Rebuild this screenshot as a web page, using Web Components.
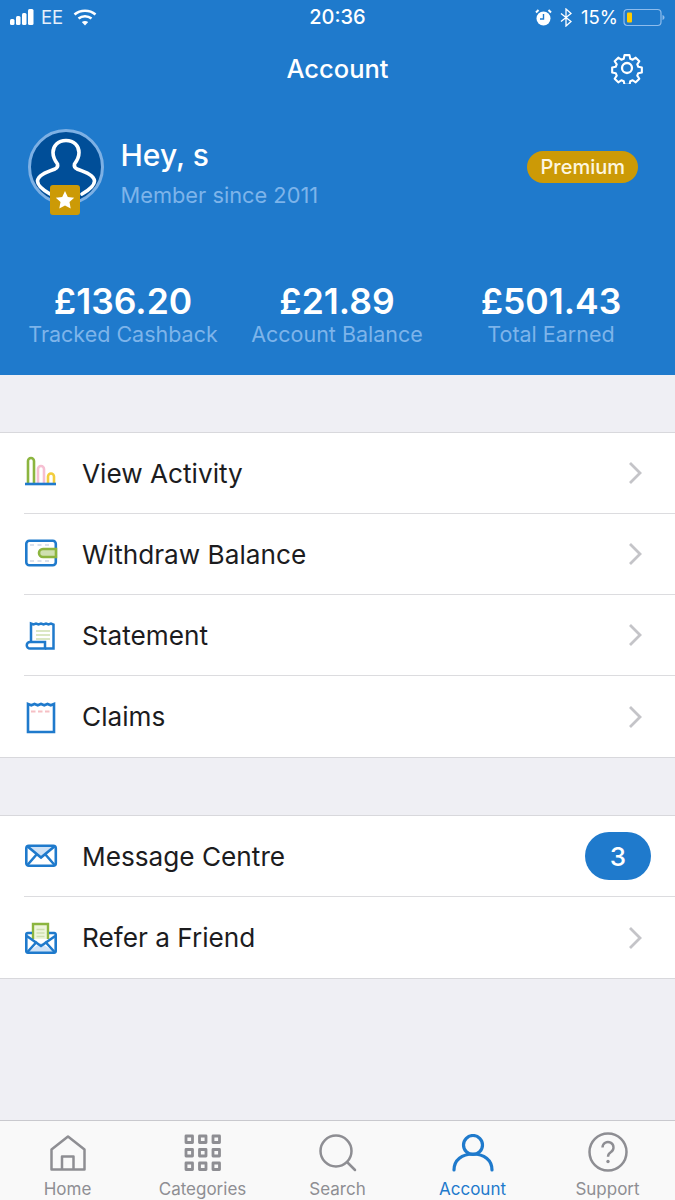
<!DOCTYPE html>
<html lang="en">
<head>
<meta charset="utf-8">
<title>Account</title>
<style>
  html, body { margin: 0; padding: 0; }
  body {
    width: 675px;
    height: 1200px;
    overflow: hidden;
    background: #efeff4;
    font-family: Inter, "Noto Sans", sans-serif;
  }
  account-screen { height: 1200px; }
</style>
</head>
<body>
<account-screen>
  <status-bar slot="top"></status-bar>
  <account-header slot="top">
    <stat-item value="£136.20" label="Tracked Cashback"></stat-item>
    <stat-item value="£21.89" label="Account Balance"></stat-item>
    <stat-item value="£501.43" label="Total Earned"></stat-item>
  </account-header>

  <menu-group>
    <menu-row label="View Activity">
      <svg slot="icon" width="34" height="34" viewBox="0 0 34 34" fill="none" stroke-width="2.600">
        <path d="M4 28V5a3 3 0 0 1 6 0V28" stroke="#8cb53f"/>
        <path d="M14 28V13a3 3 0 0 1 6 0V28" stroke="#f6bfd2"/>
        <path d="M24 28V20.500a3 3 0 0 1 6 0V28" stroke="#f2cd3c"/>
        <path d="M1 28h31" stroke="#1f7acc"/>
      </svg>
    </menu-row>
    <menu-row label="Withdraw Balance">
      <svg slot="icon" width="34" height="34" viewBox="0 0 34 34" fill="none">
        <rect x="2.300" y="3.800" width="29.500" height="24.500" rx="3" stroke="#1f7acc" stroke-width="2.600"/>
        <path d="M6 8h22M6 24h22" stroke="#cfd8e6" stroke-width="1.400" stroke-dasharray="4 3.500"/>
        <path d="M32 12H19a4 4 0 0 0 0 8H32z" fill="#cfe0b0" stroke="#8cb53f" stroke-width="2.600"/>
      </svg>
    </menu-row>
    <menu-row label="Statement">
      <svg slot="icon" width="34" height="34" viewBox="0 0 34 34" fill="none">
        <path d="M7 24V5.500l2.500 1 2.500-1 2.500 1 2.500-1 2.500 1 2.500-1 2.500 1 2.500-1 2.500 1V30.500H21" stroke="#1f7acc" stroke-width="2.500"/>
        <path d="M12 13h14M12 17h14M12 21h14" stroke="#cfe0b0" stroke-width="1.500"/>
        <path d="M6 24h15v6.500H6a3.250 3.250 0 0 1 0-6.500z" stroke="#1f7acc" stroke-width="2.500"/>
      </svg>
    </menu-row>
    <menu-row label="Claims">
      <svg slot="icon" width="34" height="34" viewBox="0 0 34 34" fill="none">
        <path d="M4 4l3.250 1.300L10.500 4l3.250 1.300L17 4l3.250 1.300L23.500 4l3.250 1.300L30 4v28H4z" stroke="#1f7acc" stroke-width="2.600"/>
        <path d="M7 11.500h20" stroke="#f6bfc4" stroke-width="1.800" stroke-dasharray="4.500 2.500"/>
      </svg>
    </menu-row>
  </menu-group>

  <menu-group>
    <menu-row label="Message Centre" badge="3">
      <svg slot="icon" width="34" height="34" viewBox="0 0 34 34" fill="none">
        <path d="M3 7l14 11.500L31 7z" fill="#cfe2f6"/>
        <rect x="2.300" y="6.800" width="29.500" height="20" rx="2.500" stroke="#1f7acc" stroke-width="2.600"/>
        <path d="M3 7l14 11.500L31 7M3 26.500l10-11.500M31 26.500L21 15" stroke="#1f7acc" stroke-width="2.600"/>
      </svg>
    </menu-row>
    <menu-row label="Refer a Friend">
      <svg slot="icon" width="34" height="34" viewBox="0 0 34 34" fill="none">
        <path d="M9 18V3h15v15" fill="#eef5dc" stroke="#8cb53f" stroke-width="2.400"/>
        <path d="M12.500 8.500h8M12.500 12h8M12.500 15.500h8" stroke="#cfe0b0" stroke-width="1.500"/>
        <path d="M11 26l6-4 6 4 8 5.500H3z" fill="#cfe2f6"/>
        <path d="M8 12H3.800A1.500 1.500 0 0 0 2.300 13.500v16.700a1.500 1.500 0 0 0 1.500 1.500h26.400a1.500 1.500 0 0 0 1.500-1.500V13.500a1.500 1.500 0 0 0-1.500-1.500H25" stroke="#1f7acc" stroke-width="2.600"/>
        <path d="M2.800 15L17 25l14.200-10M3 31.500l10-11M31 31.500l-10-11" stroke="#1f7acc" stroke-width="2.600"/>
      </svg>
    </menu-row>
  </menu-group>

  <tab-bar slot="bottom">
    <tab-item label="Home">
      <svg width="38" height="38" viewBox="0 0 38 38" fill="none" stroke="#8e8e93" stroke-width="2.500" stroke-linejoin="round">
        <path d="M2.500 15.500L19 2.500l16.500 13V35.500h-33z"/>
        <path d="M13 35.500V22.500h11.500V35.500"/>
      </svg>
    </tab-item>
    <tab-item label="Categories">
      <svg width="38" height="38" viewBox="0 0 38 38" fill="none" stroke="#8e8e93" stroke-width="2.800" stroke-linejoin="round">
        <rect x="2" y="2" width="6.500" height="6.500"/><rect x="15.500" y="2" width="6.500" height="6.500"/><rect x="29" y="2" width="6.500" height="6.500"/>
        <rect x="2" y="15.500" width="6.500" height="6.500"/><rect x="15.500" y="15.500" width="6.500" height="6.500"/><rect x="29" y="15.500" width="6.500" height="6.500"/>
        <rect x="2" y="29" width="6.500" height="6.500"/><rect x="15.500" y="29" width="6.500" height="6.500"/><rect x="29" y="29" width="6.500" height="6.500"/>
      </svg>
    </tab-item>
    <tab-item label="Search">
      <svg width="38" height="38" viewBox="0 0 38 38" fill="none" stroke="#8e8e93" stroke-width="2.500" stroke-linecap="round">
        <circle cx="17" cy="17" r="15.500"/>
        <path d="M28.500 28.500L36 36"/>
      </svg>
    </tab-item>
    <tab-item label="Account" active>
      <svg width="42" height="38" viewBox="0 0 42 38" fill="none" stroke="#1f7acc" stroke-width="3.200" stroke-linecap="round">
        <circle cx="21" cy="11" r="9.500"/>
        <path d="M2 36C2 26 10 20 21 20s19 6 19 16"/>
      </svg>
    </tab-item>
    <tab-item label="Support">
      <svg width="40" height="40" viewBox="0 0 40 40" fill="none" stroke="#8e8e93" stroke-width="2.500">
        <circle cx="20" cy="20" r="18.500"/>
        <path d="M14.500 15.500a5.500 5.500 0 1 1 8.500 4.600c-2 1.300-3 2.300-3 4.600" stroke-width="2.400"/>
        <circle cx="20" cy="29.500" r="1.700" fill="#8e8e93" stroke="none"/>
      </svg>
    </tab-item>
  </tab-bar>
</account-screen>

<script>
class AccountScreen extends HTMLElement {
  constructor() {
    super()
    this.attachShadow({ mode: 'open' })
    this.shadowRoot.innerHTML = `
      <style>
        :host {
          display: flex;
          flex-direction: column;
          background: #efeff4;
        }
        main {
          flex: 1;
          display: flex;
          flex-direction: column;
          gap: 57px;
          padding-top: 57px;
        }
      </style>
      <slot name="top"></slot>
      <main><slot></slot></main>
      <slot name="bottom"></slot>
    `
  }
}

class StatusBar extends HTMLElement {
  constructor() {
    super()
    this.attachShadow({ mode: 'open' })
    this.shadowRoot.innerHTML = `
      <style>
        :host {
          display: grid;
          grid-template-columns: 1fr auto 1fr;
          align-items: center;
          height: 34px;
          padding: 0 10px;
          background: #1f7acc;
          color: #fff;
          font-size: 18.500px;
        }
        .left, .right { display: flex; align-items: center; }
        .right { justify-content: flex-end; }
        .carrier { margin-left: 5px; color: #e6f0fa; }
        .wifi { margin-left: 10px; }
        .time { font-weight: 500; font-size: 20px; }
        .bt { margin-left: 8px; }
        .pct { margin-left: 9px; }
        .batt { margin-left: 5px; }
      </style>
      <div class="left">
        <svg width="26" height="18" viewBox="0 0 26 18" fill="#fff">
          <rect x="0" y="11" width="4.500" height="6" rx="1.500"/>
          <rect x="6" y="8" width="4.500" height="9" rx="1.500"/>
          <rect x="12" y="5" width="4.500" height="12" rx="1.500"/>
          <rect x="18" y="1" width="5.500" height="16" rx="1.500"/>
        </svg>
        <span class="carrier">EE</span>
        <svg class="wifi" width="24" height="17" viewBox="0 0 24 17" fill="none" stroke="#fff" stroke-width="2.600">
          <path d="M1.500 5.500c6-5 15-5 21 0"/>
          <path d="M5.500 9.500c3.800-3 9.200-3 13 0"/>
          <path d="M12 16.500l-3.200-3.500c2-1.400 4.400-1.400 6.400 0z" fill="#fff" stroke="none"/>
        </svg>
      </div>
      <div class="time">20:36</div>
      <div class="right">
        <svg width="17" height="17" viewBox="0 0 17 17" fill="#fff">
          <circle cx="8.500" cy="9.500" r="7"/>
          <path d="M1 3.500L3.500 1M16 3.500L13.500 1" stroke="#fff" stroke-width="2"/>
          <path d="M8.500 5v5H5" stroke="#1f7acc" stroke-width="1.400" fill="none"/>
        </svg>
        <svg class="bt" width="12" height="19" viewBox="0 0 12 19" fill="none" stroke="#fff" stroke-width="1.300">
          <path d="M1 5.500l10 8L6 18V1l5 4.500-10 8"/>
        </svg>
        <span class="pct">15%</span>
        <svg class="batt" width="42" height="19" viewBox="0 0 42 19" fill="none">
          <rect x="1" y="1.500" width="37" height="16" rx="3.500" stroke="#8dbcec" stroke-width="1.200"/>
          <rect x="4" y="4.500" width="5" height="10" rx="1" fill="#ffcc00"/>
          <path d="M39.500 7v5c1.300-.4 2-1.300 2-2.500s-.7-2.100-2-2.500z" fill="#8dbcec"/>
        </svg>
      </div>
    `
  }
}

class AccountHeader extends HTMLElement {
  constructor() {
    super()
    this.attachShadow({ mode: 'open' })
    this.shadowRoot.innerHTML = `
      <style>
        :host {
          display: block;
          height: 341px;
          background: #1f7acc;
          color: #fff;
        }
        .nav {
          display: grid;
          grid-template-columns: 1fr auto 1fr;
          align-items: center;
          height: 70px;
        }
        .nav h1 {
          grid-column: 2;
          margin: 0 0 2px;
          font-size: 25.500px;
          font-weight: 500;
        }
        .nav svg { justify-self: end; margin: 0 32px 2px 0; }
        .profile {
          display: flex;
          align-items: center;
          height: 76px;
          margin-top: 25px;
          padding: 0 37px 0 28px;
        }
        .avatar {
          position: relative;
          width: 76px;
          height: 76px;
          flex: none;
        }
        .star {
          position: absolute;
          left: 22px;
          top: 56px;
          width: 30px;
          height: 30px;
          border-radius: 3px;
          background: #cc9a06;
          display: flex;
          align-items: center;
          justify-content: center;
        }
        .who { margin-left: 16.500px; flex: 1; align-self: flex-start; margin-top: 9px; }
        .hey { font-size: 30px; font-weight: 500; line-height: 35px; }
        .since { margin-top: 8.500px; font-size: 21.800px; line-height: 26px; color: #7db4ea; }
        .pill {
          padding: 0 13px;
          height: 32px;
          line-height: 32px;
          border-radius: 16px;
          background: #cc9a06;
          font-size: 20px;
          font-weight: 500;
          color: #fdf6e0;
        }
        .stats {
          display: grid;
          grid-template-columns: 214px 214px 214px;
          margin-top: 81px;
          padding: 0 16px;
        }
      </style>
      <div class="nav">
        <h1>Account</h1>
        <svg width="32" height="32" viewBox="0 0 32 32" fill="none" stroke="#fff" stroke-width="2.300" stroke-linejoin="round">
          <path d="M13.200 1.700h5.600l.8 4 2.700 1.100 3.400-2.300 4 4-2.300 3.400 1.100 2.700 4 .8v5.600l-4 .8-1.100 2.700 2.300 3.400-4 4-3.400-2.300-2.700 1.100-.8 4h-5.600l-.8-4-2.700-1.100-3.400 2.300-4-4 2.300-3.400-1.100-2.700-4-.8v-5.600l4-.8 1.100-2.700-2.300-3.400 4-4 3.400 2.300 2.700-1.100z" transform="translate(1.600 1.600) scale(.9)"/>
          <circle cx="16" cy="16" r="5"/>
        </svg>
      </div>
      <div class="profile">
        <div class="avatar">
          <svg width="76" height="76" viewBox="0 0 76 76" fill="none">
            <circle cx="38" cy="38" r="36.500" fill="#004e98" stroke="#7db0e4" stroke-width="3"/>
            <path d="M38 11.500C30 11.500 25 17 25 23.500C25 29 28 33 29.500 35C30 37 29 39 27 40C19 43 10 46 9.500 52C9.500 57 15 61 22 65M38 11.500C46 11.500 51 17 51 23.500C51 29 48 33 46.500 35C46 37 47 39 49 40C57 43 66 46 66.500 52C66.500 57 61 61 54 65" stroke="#fff" stroke-width="3.600" stroke-linecap="round"/>
          </svg>
          <div class="star">
            <svg width="20" height="20" viewBox="0 0 20 20" fill="#fff"><path d="M10 1l2.800 5.900 6.400.8-4.700 4.400 1.200 6.400L10 15.400l-5.700 3.100 1.200-6.400L.8 7.700l6.400-.8z"/></svg>
          </div>
        </div>
        <div class="who">
          <div class="hey">Hey, s</div>
          <div class="since">Member since 2011</div>
        </div>
        <div class="pill">Premium</div>
      </div>
      <div class="stats"><slot></slot></div>
    `
  }
}

class StatItem extends HTMLElement {
  constructor() {
    super()
    this.attachShadow({ mode: 'open' })
  }

  connectedCallback() {
    this.shadowRoot.innerHTML = `
      <style>
        :host { display: block; text-align: center; white-space: nowrap; }
        .value { font-size: 35.500px; font-weight: 600; line-height: 32px; color: #fff; }
        .label { font-size: 21.500px; line-height: 26px; color: #7db4ea; margin-top: 3px; }
      </style>
      <div class="value">${this.getAttribute('value')}</div>
      <div class="label">${this.getAttribute('label')}</div>
    `
  }
}

class MenuGroup extends HTMLElement {
  constructor() {
    super()
    this.attachShadow({ mode: 'open' })
    this.shadowRoot.innerHTML = `
      <style>
        :host {
          display: block;
          background: #fff;
          border-top: 1px solid #d8d8dc;
          border-bottom: 1px solid #d8d8dc;
        }
      </style>
      <slot></slot>
    `
  }
}

class MenuRow extends HTMLElement {
  constructor() {
    super()
    this.attachShadow({ mode: 'open' })
  }

  connectedCallback() {
    const badge = this.getAttribute('badge')
    this.shadowRoot.innerHTML = `
      <style>
        :host {
          display: block;
          padding-left: 24px;
          color: #1c1c1e;
        }
        :host(:not(:last-child)) .row { border-bottom: 1px solid #dcdcdf; }
        .row {
          display: flex;
          align-items: center;
          height: 81px;
          box-sizing: border-box;
          padding-right: 33px;
        }
        .icon { width: 34px; display: flex; justify-content: center; flex: none; }
        .label { flex: 1; margin-left: 24px; font-size: 26.200px; }
        .badge {
          width: 66px;
          height: 48px;
          margin-right: -9px;
          border-radius: 24px;
          background: #1f7acc;
          color: #fff;
          font-size: 26px;
          font-weight: 500;
          display: flex;
          align-items: center;
          justify-content: center;
        }
      </style>
      <div class="row">
        <div class="icon"><slot name="icon"></slot></div>
        <span class="label">${this.getAttribute('label')}</span>
        ${badge ? `<span class="badge">${badge}</span>` : `
        <svg width="14" height="24" viewBox="0 0 14 24" fill="none" stroke="#c4c4c8" stroke-width="2.800">
          <path d="M2 2l10 10L2 22"/>
        </svg>`}
      </div>
    `
  }
}

class TabBar extends HTMLElement {
  constructor() {
    super()
    this.attachShadow({ mode: 'open' })
    this.shadowRoot.innerHTML = `
      <style>
        :host {
          display: grid;
          grid-template-columns: 135px 135px 135px 135px 135px;
          height: 80px;
          box-sizing: border-box;
          border-top: 1px solid #c9c9ce;
          background: #f9f9f9;
        }
      </style>
      <slot></slot>
    `
  }
}

class TabItem extends HTMLElement {
  constructor() {
    super()
    this.attachShadow({ mode: 'open' })
  }

  connectedCallback() {
    this.shadowRoot.innerHTML = `
      <style>
        :host {
          display: flex;
          flex-direction: column;
          align-items: center;
          color: #8e8e93;
          overflow: hidden;
        }
        :host([active]) { color: #1f7acc; }
        .glyph { height: 42px; margin-top: 9px; display: flex; align-items: flex-end; }
        .text { margin-top: 7px; font-size: 17px; line-height: 20px; white-space: nowrap; }
      </style>
      <div class="glyph"><slot></slot></div>
      <div class="text">${this.getAttribute('label')}</div>
    `
  }
}

customElements.define('account-screen', AccountScreen)
customElements.define('status-bar', StatusBar)
customElements.define('account-header', AccountHeader)
customElements.define('stat-item', StatItem)
customElements.define('menu-group', MenuGroup)
customElements.define('menu-row', MenuRow)
customElements.define('tab-bar', TabBar)
customElements.define('tab-item', TabItem)
</script>
</body>
</html>
